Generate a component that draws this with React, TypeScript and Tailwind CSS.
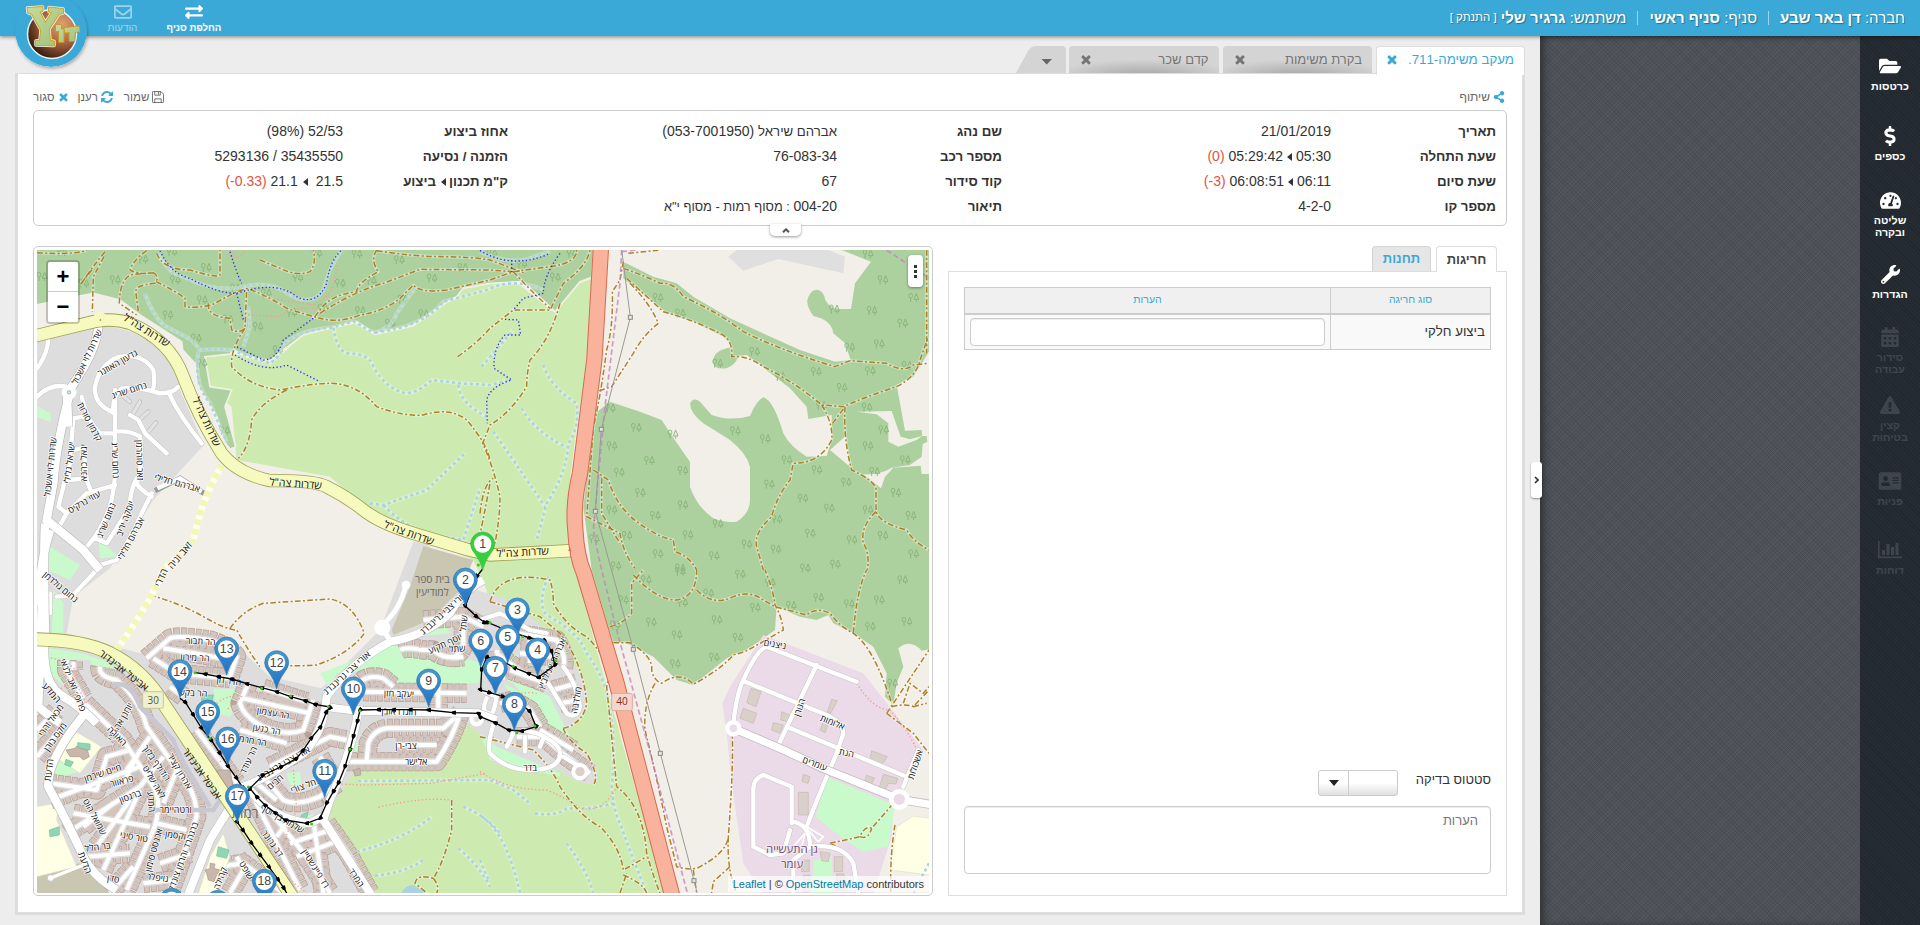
import React from 'react';
import {
  FaFolderOpen,
  FaDollarSign,
  FaTachometerAlt,
  FaWrench,
  FaCalendarAlt,
  FaExclamationTriangle,
  FaAddressCard,
  FaRegEnvelope,
  FaExchangeAlt,
  FaShareAlt,
} from 'react-icons/fa';

type IconProps = { className?: string };

const XIcon = ({ className }: IconProps) => (
  <svg viewBox="250 330 1290 1290" className={className} fill="currentColor">
    <path d="M1490 1322q0 40-28 68l-136 136q-28 28-68 28t-68-28l-294-294-294 294q-28 28-68 28t-68-28l-136-136q-28-28-28-68t28-68l294-294-294-294q-28-28-28-68t28-68l136-136q28-28 68-28t68 28l294 294 294-294q28-28 68-28t68 28l136 136q28 28 28 68t-28 68l-294 294 294 294q28 28 28 68z" />
  </svg>
);

const RefreshIcon = ({ className }: IconProps) => (
  <svg viewBox="128 128 1536 1536" className={className} fill="currentColor">
    <path d="M1639 1056q0 5-1 7-64 268-268 434.5t-478 166.5q-146 0-282.5-55t-243.5-157l-129 129q-19 19-45 19t-45-19-19-45v-448q0-26 19-45t45-19h448q26 0 45 19t19 45-19 45l-137 137q71 66 161 102t187 36q134 0 250-65t186-179q11-17 53-117 8-23 30-23h192q13 0 22.5 9.5t9.5 22.5zm25-800v448q0 26-19 45t-45 19h-448q-26 0-45-19t-19-45 19-45l138-138q-148-137-349-137-134 0-250 65t-186 179q-11 17-53 117-8 23-30 23h-199q-13 0-22.5-9.5t-9.5-22.5v-7q65-268 270-434.5t480-166.5q146 0 284 55.5t245 156.5l130-129q19-19 45-19t45 19 19 45z" />
  </svg>
);

const FloppyIcon = ({ className }: IconProps) => (
  <svg viewBox="0 0 13 13" className={className} fill="none" stroke="currentColor">
    <path d="M.5 1.2Q.5.5 1.2.5H9.6L12.5 3.4V11.8Q12.5 12.5 11.8 12.5H1.2Q.5 12.5.5 11.8Z" />
    <path d="M3 12.5V8.5H10V12.5M3 .5V4.5H9V.5M7 1V4" />
  </svg>
);

const ChartIcon = ({ className }: IconProps) => (
  <svg viewBox="0 0 24 18" className={className} fill="currentColor">
    <path d="M0 0h1.6v15.6H24V17.2H0zM4 9h3v5H4zM8.500 3h3v11h-3zM13 6h3v8h-3zM17.500 2h3v12h-3z" />
  </svg>
);

/* ---------------------------------- map ---------------------------------- */

const LEFT = '';
const EAST = 'translate(1350 0)';
const SOUTH = 'translate(0 990)';
const SE = 'translate(1350 990)';

type Line = { t: string; d: string };

const tracks: Line[] = [
  { t: LEFT, d: 'M21 38Q120 45 170 32M225 35Q180 90 155 130M222 50L190 110L187 215M185 90L150 135' },
  { t: LEFT, d: 'M350 32Q310 60 300 90Q330 105 370 98Q390 110 375 130Q310 135 318 160L325 215M370 98L310 103Q270 110 268 190L320 225' },
  { t: LEFT, d: 'M378 125Q440 155 465 175V200Q500 205 545 195L610 160L650 145Q720 170 770 205Q830 225 870 235Q930 250 990 225Q1060 215 1110 175L1150 135Q1170 160 1250 150L1380 120L1450 95L1560 80Q1640 70 1640 30' },
  { t: LEFT, d: 'M380 40Q400 90 480 90Q560 115 570 105V30M535 190Q530 230 600 235L605 270Q630 280 645 265L650 150' },
  { t: LEFT, d: 'M690 60L750 85Q800 110 840 95Q860 70 850 30M1040 30Q1020 60 1045 95Q980 130 980 155Q900 165 870 210L850 235' },
  { t: LEFT, d: 'M870 220Q980 150 1060 130L1170 88L1380 90L1450 95M1040 32Q1150 50 1240 50Q1320 50 1380 60L1480 98' },
  { t: LEFT, d: 'M645 265Q600 330 605 380Q660 440 750 450Q850 430 900 430Q980 430 1040 500Q1120 530 1180 525Q1260 500 1310 540Q1370 610 1380 660' },
  { t: LEFT, d: 'M770 450Q690 490 665 540Q660 620 625 655M1283 350Q1340 310 1380 265L1450 210L1560 210L1600 130Q1670 80 1680 30' },
  { t: EAST, d: 'M100 95Q150 150 210 205M240 190Q210 300 150 360Q140 400 140 440Q90 520 30 555L8 610Q40 680 60 770Q60 830 45 910M0 820Q10 730 40 715' },
  { t: EAST, d: 'M445 40L540 30M430 85Q500 110 540 130Q580 125 610 170Q720 220 790 275Q900 330 1065 380L1110 362L1220 370Q1270 400 1300 375L1347 370' },
  { t: EAST, d: 'M430 65L420 120L397 155Q400 260 380 330Q360 480 340 560Q330 700 320 830L420 880Q430 940 465 985' },
  { t: EAST, d: 'M440 115L550 215Q640 240 720 280Q760 300 755 350Q800 345 850 380Q950 430 1025 495L1090 500Q1170 465 1250 440Q1310 410 1320 360L1345 290' },
  { t: EAST, d: 'M450 130Q510 190 535 250Q490 285 460 340L395 440L350 455M1025 495Q1060 550 1055 600Q1020 670 940 670L930 720Q890 770 875 830Q820 880 830 920L850 990' },
  { t: EAST, d: 'M1095 500Q1090 600 1115 690Q1180 720 1188 745V815Q1200 850 1280 870Q1300 905 1347 930M1188 815Q1140 860 1150 910Q1170 940 1162 990M1058 550L1095 500M1340 30V340' },
  { t: EAST, d: 'M340 690L385 720Q410 800 470 845Q530 890 580 900L585 935Q630 950 650 990M365 715V820L420 910' },
  { t: SOUTH, d: 'M360 75Q450 100 520 140Q590 180 620 180Q660 250 690 290M600 175Q640 120 700 100L900 87Q970 100 1003 190Q960 250 860 285Q780 290 740 285' },
  { t: SOUTH, d: 'M1380 490L1395 510M1265 690V780Q1240 880 1210 925Q1160 910 1155 940Q1180 960 1190 969M1210 925Q1230 950 1220 969' },
  { t: SOUTH, d: 'M1340 -60Q1360 -150 1380 -260M1296 -78L1330 -80' },
  { t: SE, d: 'M30 95Q40 60 70 40Q120 10 210 30Q220 60 220 100Q260 170 320 200Q400 280 380 350Q390 450 410 650Q490 710 500 850Q520 920 540 969M30 95L180 140L240 190Q310 280 320 400Q310 460 250 475' },
  { t: SE, d: 'M0 500L80 520L160 540Q220 600 240 650Q300 740 360 770Q420 830 430 900L500 860M430 915Q490 940 500 969M420 969L440 910M250 475Q260 510 320 550Q360 620 340 645' },
  { t: SE, d: 'M400 218H450Q520 260 515 300Q520 330 545 340Q600 300 640 343Q720 300 760 255L795 245L840 220L910 180Q905 140 885 105Q880 60 855 0' },
  { t: SE, d: 'M390 170Q430 160 455 130V40Q480 10 490 0M460 15Q530 90 590 90Q650 80 650 0M650 60Q700 110 760 80Q810 60 850 90L885 110L980 135Q1010 110 1050 130Q1080 170 1120 190Q1180 230 1235 400M1120 190Q1130 60 1160 0' },
  { t: SE, d: 'M525 340Q490 400 495 480Q530 620 560 770Q580 850 590 890Q620 900 650 895Q740 850 745 800Q760 600 757 500M640 900L650 969M745 800Q740 900 770 969M750 890L700 935L695 969' },
  { t: SE, d: 'M1235 410Q1280 400 1300 410L1347 360M1220 430L1347 240M1270 400L1290 340L1330 370L1347 350M1220 430Q1260 460 1300 490L1347 550M1300 410L1340 400M1050 820L1140 800Q1155 765 1175 775L1240 700M1140 800Q1165 810 1175 775M1050 820Q1130 850 1135 969M1245 765Q1230 850 1232 969' },
];

const cycleways: Line[] = [
  { t: LEFT, d: 'M345 160Q365 220 400 255L485 300L510 330Q560 325 600 330L720 370Q760 340 755 320Q800 270 910 262Q960 245 975 245Q1010 270 1035 278Q1090 260 1100 220L1155 145M655 200L660 260L640 320M505 335Q490 430 540 490Q570 560 590 605' },
  { t: LEFT, d: 'M385 35Q410 100 460 110Q560 160 640 140Q720 120 780 165Q850 200 880 150L900 90Q920 50 935 30M1035 278Q1180 260 1240 185L1370 150Q1450 110 1540 150M1350 35Q1450 80 1510 50L1560 35' },
  { t: LEFT, d: 'M910 262Q920 330 950 340Q1020 340 1030 380Q1070 450 1130 460Q1170 455 1205 420L1290 430L1380 435L1440 420M1285 435Q1290 490 1370 530M1355 380L1450 270M1020 790L1060 795L1190 750L1305 640M1060 795Q1130 870 1230 890L1300 900L1350 745' },
  { t: EAST, d: 'M190 375Q210 440 290 490Q300 560 265 610Q260 700 200 790L170 900M125 505Q160 570 255 620M40 575Q100 660 195 800' },
  { t: SE, d: 'M205 20Q170 100 200 135Q300 190 320 250Q380 330 385 400Q410 500 395 650Q400 720 420 760Q460 870 500 969M165 730Q230 740 260 715Q330 720 400 700M5 740Q80 790 120 969M260 820Q320 900 340 969M0 870L25 930M1347 880L1300 969' },
  { t: SOUTH, d: 'M985 633L1380 630L1450 660L1500 700M980 845Q1120 810 1205 740M1035 917Q1120 910 1180 870M1300 710Q1370 740 1410 790M1285 835Q1350 890 1380 950' },
];

const blueDots: Line[] = [
  { t: LEFT, d: 'M390 32Q420 100 480 115Q560 160 620 160Q740 120 800 170Q860 200 890 130Q900 60 935 30M600 35Q620 100 635 130M620 160L640 240M850 235L760 300Q740 360 700 360L615 318M615 345Q700 400 770 375L870 425M1350 32Q1450 90 1560 40' },
  { t: EAST, d: 'M240 40Q190 110 190 160L130 175L100 210M75 238L115 240L122 285H75Q40 320 42 385L95 420Q30 440 20 480L22 550M95 60V95' },
];

const pinkDots: Line[] = [
  { t: LEFT, d: 'M600 30Q620 70 645 35M720 175L850 195Q910 170 915 110L925 75M655 225L750 230Q780 200 860 205' },
  { t: SOUTH, d: 'M38 230V260L100 270Q150 300 140 330L85 360M100 270L170 400M790 600L800 720L760 820M880 640L1000 645L1200 640L1370 610M1045 712Q1180 680 1260 690M540 590L600 560M690 860L830 969M1240 160L1170 200V240M560 400Q600 370 635 380L590 420' },
  { t: SE, d: 'M0 605Q80 660 200 660Q270 690 300 715Q370 730 410 650M40 400Q120 360 170 370M1130 340Q1180 420 1230 420Q1290 490 1310 540' },
];

const localRoads: Line[] = [
  { t: LEFT, d: 'M245 515Q190 490 195 440Q210 370 270 350Q340 340 370 390Q375 420 370 445M250 520Q245 470 275 445Q330 440 390 460Q430 460 445 440M417 460Q450 530 515 610M255 450V650Q260 720 240 800Q210 880 170 920M255 575Q300 570 330 590Q340 680 320 730Q330 750 365 770M345 580L410 640M345 580L325 540L300 525M155 470Q170 540 210 580H255M160 530L130 535L115 720L170 715M130 630L155 625M160 620L170 720L185 760M105 720L85 800L110 820L170 760L255 735M320 715Q300 750 300 800Q270 850 230 910L195 895M365 760L330 830Q300 900 260 960L210 975M110 820L90 855M55 290Q55 340 21 385M21 470Q60 430 110 440' },
  { t: SOUTH, d: 'M200 0L130 75L80 80M60 70V130' },
  { t: SE, d: 'M0 360L50 380Q40 440 30 430Q0 430 20 385M45 450Q20 520 30 550Q80 600 150 600Q240 600 240 550Q240 520 170 490L130 480M250 560L300 590M80 530L100 490M135 545V500M180 530L190 505M205 340L260 430Q290 450 300 410Q290 340 250 290M0 150L60 130L150 180L200 190' },
  { t: SE, d: 'M760 460Q770 370 790 330Q830 240 860 230L1130 335M1010 285L895 525M795 335L1040 435Q1090 460 1090 490L1070 550Q1010 690 980 770M920 470L1280 620M1315 540L1270 650M935 755Q990 760 990 830Q1090 820 1120 880L1135 969M935 760V650L850 615Q820 625 820 660V830L870 855L910 850L930 780M990 830L940 870V969' },
];

const greyLanes: Line[] = [
  { t: LEFT, d: 'M270 460L300 485M310 520L330 485M333 535L355 515M355 575L378 548' },
];

const housedStreets: Line[] = [
  { t: SOUTH, d: 'M350 265L420 205Q440 195 540 210Q600 230 620 260L600 320M400 235Q500 250 600 270M370 265L440 310L600 325' },
  { t: SOUTH, d: 'M655 340L630 400Q640 440 700 470Q770 500 820 480L850 390M640 385L840 430M700 355L830 395M630 480L770 520' },
  { t: SOUTH, d: 'M985 350Q1000 310 1060 325L1090 350M1000 365L1310 370M1225 340V420M1010 570L1015 520Q1030 480 1070 475H1240L1290 430M1290 430Q1270 500 1220 575H950M1100 525H1220' },
  { t: SOUTH, d: 'M700 620L760 690Q800 710 870 680L920 640M680 640L740 690M720 590L900 500L950 510M870 560L900 610M770 760L740 800M660 660L750 840L810 960M850 750L880 969M780 820L900 780M800 860L930 810M890 760Q920 800 960 860L1020 969' },
  { t: SOUTH, d: 'M110 270V300L160 385M130 275V300M210 290Q205 320 260 330Q330 390 350 470L470 640Q500 680 500 740L420 969M165 400L280 510L370 650Q400 700 370 780L290 960M60 640L200 660L230 560L300 540M60 690L330 590M110 790L330 650M130 730L360 770M160 770L250 700M330 540L280 640M200 830L300 690M220 900L330 660M170 860L300 850M240 969L310 890M360 500L290 600M400 560L330 650M440 600L400 700M380 760L470 780M390 880L480 850M340 940L430 930M21 560L100 470M21 480L80 420' },
  { t: SOUTH, d: 'M570 890L640 880L760 969M620 860L650 910M600 969L640 900M700 700L830 860L900 969M500 480L560 560L620 640M460 380L420 350' },
  { t: SOUTH, d: 'M1110 240Q1130 230 1180 240L1210 240Q1240 270 1300 260M1180 150L1300 140L1360 170M1300 140V230Q1280 270 1250 260M1400 240L1420 330' },
  { t: SE, d: 'M55 255L130 310L185 330M110 190L230 210Q260 260 250 290M120 250L220 260M150 190V280M90 300L200 340M220 360L290 340M240 400L300 390M60 400L100 390L150 420L180 470M110 500L190 500L260 560L330 610M180 480L280 540' },
];

const trees: number[][] = [
  [95, 35], [35, 110], [255, 120], [160, 130], [338, 58], [425, 35], [528, 83], [435, 120], [516, 180], [413, 225], [498, 295], [593, 238],
  [615, 145], [708, 160], [683, 260], [743, 330], [803, 113], [860, 40], [930, 130], [980, 42], [1023, 122], [1107, 60], [1205, 115],
  [1297, 83], [1117, 178], [990, 213], [1080, 250], [1180, 222], [785, 218], [878, 205], [515, 370], [583, 572], [1385, 40], [1475, 72],
  [1575, 112], [1625, 40], [2513, 42], [2558, 120], [2650, 173], [2525, 212], [2617, 250], [2412, 208], [2458, 322], [2547, 312],
  [2630, 377], [2520, 393], [2435, 443], [2358, 395], [2373, 497], [2510, 502], [2560, 570], [2513, 618], [2625, 660], [2533, 695],
  [1883, 173], [1950, 220], [2173, 335], [2062, 370], [2250, 410], [1740, 505], [1818, 563], [1745, 618], [1857, 662], [1767, 697],
  [1928, 583], [1958, 692], [2115, 573], [2205, 597], [2270, 660], [2360, 690], [2448, 727], [2597, 758], [1830, 758], [1958, 795],
  [2217, 733], [2318, 775], [2397, 805], [2513, 810], [2642, 827], [1745, 810], [1875, 827], [2063, 852], [1692, 897], [1790, 887],
  [1973, 885], [2150, 913], [2240, 838], [2340, 880], [2465, 900], [2558, 887], [1883, 942], [2052, 948], [2237, 928], [2650, 942],
  [1757, 978], [1950, 985], [2325, 985], [2415, 973], [1848, 1020], [1950, 995], [2130, 1003], [2220, 1028], [2617, 1020],
  [1780, 1080], [1957, 1088], [2035, 1060], [2175, 1103], [2283, 1097], [2365, 1073], [2457, 1092], [2547, 1080], [1863, 1147],
  [2060, 1140], [1940, 1185], [2123, 1193], [2520, 1160], [2630, 1145], [2052, 1252], [1935, 1272], [2587, 1330], [1755, 1155],
];

type LabelDef = [string, number, number, number, number?];

const labels: LabelDef[] = [
  ['שדרות צה"ל', 350, 270, 32, 32],
  ['שדרות צה"ל', 530, 545, 65, 32],
  ['שדרות צה"ל', 797, 730, 4, 32],
  ['שדרות צה"ל', 1137, 878, 20, 32],
  ['שדרות צה"ל', 1478, 936, -3, 32],
  ['שדרות לוי אשכול', 170, 350, -65],
  ['שדרות לוי אשכול', 60, 680, -84],
  ['גדעון האוזנר', 262, 368, -30],
  ['נחום שריג', 297, 450, -18],
  ['קדמון סורות', 180, 545, 62],
  ['ישראל גלילי', 117, 668, -83],
  ['נחום שריג', 257, 660, 88],
  ['זאב סוהרמן', 330, 660, 88],
  ['יגאל כהנא', 160, 668, -90],
  ['אברהם חלילי', 442, 728, 15],
  ['אברהם חלילי', 302, 895, -62],
  ['עוזי נרקיס', 162, 785, -30],
  ['נחום שריג', 228, 840, -68],
  ['יוסקה יריב', 285, 835, -70],
  ['זאב וניה', 448, 945, -50, 30],
  ['הדרי', 392, 1012, -65, 30],
  ['נחום גולדמן', 92, 1040, 40],
  ['אביטל אבינדור', 282, 1290, 38, 31],
  ['אביטל אבינדור', 517, 1600, 55, 31],
  ['המדע', 65, 1358, 48, 29],
  ['פרופ׳ זאב ילנאי', 130, 1335, 68],
  ['הר תבור', 512, 1203, 3],
  ['הר מירון', 495, 1252, 3],
  ['הר בקע', 490, 1358, 3],
  ['הדר חן', 597, 1322, 8],
  ['הר עצמון', 730, 1418, 10],
  ['הר כנען', 710, 1467, 10],
  ['הר חרמון', 662, 1500, 10],
  ['הר עודד', 655, 1560, -65],
  ['אורי צבי גרינברג', 950, 1298, -42, 28],
  ['אורי צבי גרינברג', 1240, 1118, -42, 28],
  ['אורי צבי גרינברג', 760, 1570, -30, 28],
  ['שלמה בן יוסף', 757, 1735, 30],
  ['נחל צורי', 825, 1635, -20],
  ['חבים', 735, 1625, -40],
  ['יעקב חזן', 1107, 1360, 2],
  ['הוגו ראובן', 1107, 1414, 2],
  ['צבי-רן', 1128, 1515, 0],
  ['אלישר', 1158, 1565, 0],
  ['שתל', 1300, 1150, -85],
  ['יוסף תקוע', 1245, 1210, -25],
  ['שתל', 1282, 1225, -5],
  ['חיים שירמן', 218, 1598, -18],
  ['פראוור', 275, 1622, -15],
  ['ברגסון', 300, 1668, -20],
  ['המדע', 365, 1685, 85],
  ['הדעת', 56, 1590, -82, 29],
  ['הדעת', 165, 1868, 70, 29],
  ['שמואל הוט', 195, 1730, 62],
  ['טור סיני', 312, 1790, 10],
  ['בר הלל', 203, 1820, -8],
  ['ורטהיימר', 437, 1707, 0],
  ['וקסמן', 437, 1785, 8],
  ['ארנסט סימון', 370, 1830, -75],
  ['ברגהרד והרמן צונדק', 458, 1850, -70],
  ['גויפלר', 383, 1912, 8],
  ['סדן', 250, 1915, 10],
  ['מקס בורן', 75, 1490, -55],
  ['מכאל זהרי', 62, 1440, -55],
  ['יוחנן אהרוני', 270, 1445, -60],
  ['האורה', 262, 1487, 45],
  ['רודולף בלוך', 380, 1568, 55],
  ['אהרון קציר', 450, 1593, 60],
  ['לאה שליט', 373, 1625, 60],
  ['דב גרונר', 728, 1810, 55],
  ['שופט', 650, 1890, 60],
  ['רד פיינשטיין', 858, 1885, 58],
  ['המרד', 980, 1913, 55],
  ['קהילה', 570, 1915, -70],
  ['מולדבה', 1638, 1380, -80],
  ['בדר', 1500, 1583, 0],
  ['אברהם אנילביץ', 1565, 1270, -65],
  ['ניצנים', 2235, 1212, 10],
  ['הגורן', 2308, 1402, -70],
  ['אלומות', 2408, 1446, 22],
  ['הגת', 2450, 1538, 12],
  ['עומרים', 2355, 1570, 20],
  ['אשכולות', 2655, 1573, -72],
];

const route =
  'M1358 987L1340 1010L1306 1098L1340 1130L1365 1148L1375 1148L1440 1175L1500 1194L1545 1202L1565 1235L1575 1275L1525 1312L1495 1300L1453 1283L1410 1260L1370 1252L1355 1290L1352 1350L1380 1358L1420 1370L1460 1380L1500 1415L1518 1460L1475 1473L1435 1470L1395 1448L1350 1430L1345 1420L1270 1418L1195 1410L1140 1409L1090 1409L1045 1409L990 1410L982 1445L970 1490L960 1530L945 1580L925 1630L910 1655L890 1690L870 1735L830 1750L765 1740L735 1718L705 1695L680 1670L660 1645L700 1605L755 1580L800 1555L820 1530L845 1493L872 1460L890 1415L900 1401L855 1393L825 1382L782 1370L740 1355L695 1343L650 1331L605 1317L565 1310L525 1302L495 1298';
const route2 = 'M450 1375L467 1388L490 1425L515 1465L545 1502L570 1540L595 1580L620 1615L640 1645M622 1747L640 1772L665 1810L692 1847L718 1882L745 1920L762 1945L770 1959';

const pins: [string, number, number][] = [
  ['1', 1358, 912],
  ['2', 1306, 1020],
  ['3', 1462, 1110],
  ['5', 1433, 1191],
  ['6', 1352, 1203],
  ['13', 590, 1227],
  ['4', 1523, 1230],
  ['12', 740, 1268],
  ['7', 1396, 1285],
  ['14', 450, 1295],
  ['9', 1196, 1323],
  ['10', 970, 1347],
  ['8', 1453, 1393],
  ['15', 533, 1416],
  ['16', 593, 1497],
  ['11', 884, 1594],
  ['17', 622, 1669],
  ['18', 703, 1924],
  ['', 425, 1981],
  ['', 563, 1987],
];

const Lines = ({ items, ...rest }: { items: Line[] } & React.SVGProps<SVGPathElement>) => (
  <>
    {items.map((l, i) => (
      <path key={i} d={l.d} transform={l.t || undefined} fill="none" strokeLinejoin="round" {...rest} />
    ))}
  </>
);

const hwy40 = 'M1713 20L1693 360L1650 700Q1628 790 1636 870Q1640 950 1662 1000L1760 1330L1930 1980';
const roadTzahal =
  'M15 288L170 250Q240 230 300 250Q420 300 460 410Q500 520 575 640Q620 700 720 722Q850 720 890 740Q950 770 1000 810Q1050 850 1150 880L1310 928L1380 945L1625 932';
const roadAvigdor = 'M15 1198Q160 1200 240 1240Q340 1290 400 1390L600 1690L790 1975';
const artery = 'M205 260Q200 330 125 440Q80 600 70 730L50 840L160 930L210 990M110 450L115 560M45 850Q40 960 45 1180Q30 1330 100 1370Q150 1400 200 1450M60 870Q20 1000 35 1100L25 1400Q60 1430 90 1450M165 1420Q50 1560 55 1640Q120 1760 160 1850Q190 1910 260 1950';
const artery2 = 'M1360 1020Q1290 1060 1260 1120Q1180 1190 1080 1205Q960 1270 890 1370Q880 1480 820 1540Q700 1620 640 1640Q600 1700 540 1800L470 1975M900 1402Q960 1412 985 1410Q970 1520 900 1680L880 1740L1030 1975M985 1412L1345 1420L1400 1440M660 1650Q730 1740 840 1750L875 1730';

function TownMap() {
  return (
    <svg viewBox="21 30 2676 1929" className="block h-[643px] w-[892px]" style={{ fontFamily: "'Open Sans', 'Noto Sans', 'DejaVu Sans', sans-serif" }}>
      <defs>
        <linearGradient id="pin" x1="0" y1="0" x2="0" y2="1">
          <stop offset="0" stopColor="#4a97cb" />
          <stop offset="1" stopColor="#1f72c4" />
        </linearGradient>
        <g id="tree" fill="none" stroke="#86b577" strokeWidth="2.8">
          <ellipse cx="-8" cy="-6" rx="5.500" ry="7" />
          <path d="M-8 1V13M9 -13L2 5H16ZM9 5V13" />
        </g>
        <marker id="dot" viewBox="-8 -8 16 16" markerWidth="16" markerHeight="16" markerUnits="userSpaceOnUse" orient="auto">
          <path d="M-8 -6Q3 -7 7 0Q3 7 -8 6Z" fill="#000" />
        </marker>
      </defs>
      <rect x="0" y="0" width="2760" height="2000" fill="#f2efe9" />

      {/* land cover */}
      <path
        fill="#cdebb0"
        d="M525 350L605 345L760 340L820 280L910 262L980 250L1035 285L1150 260L1245 190L1300 145L1450 120L1570 215L1650 130L1690 115L1665 400L1640 560L1612 780L1620 920L1700 1230L1780 1520L1910 1970H1030L880 1750L960 1590L1290 1450L1380 1300L1370 1050L1330 960L1060 850L900 710L620 660L605 500L535 440Z"
      />
      <path
        fill="#add19e"
        stroke="#f2efe9"
        strokeWidth="5"
        d="M10 20H1692L1685 112L1650 125L1575 215L1480 125L1380 130L1300 145L1280 170L1245 190L1150 255L1035 282L980 245L910 262L820 285L760 330L720 362L650 350L610 330L600 342L525 350L540 440L605 450L585 500L617 620L600 628L580 600L560 530L500 430L495 370L458 330L455 305L330 225L270 180L190 160L140 170L10 197Z"
      />
      <path
        fill="#add19e"
        transform={EAST}
        d="M430 65L520 110L590 130L640 170L750 235L860 285L960 330L1065 365L1112 360L1095 310L1060 280Q1055 240 1000 228Q980 200 982 180Q990 150 1010 149Q1030 150 1036 180Q1050 205 1075 207L1113 207L1125 130L1173 65L1085 30H1360V1225L1325 1232Q1290 1195 1255 1225L1270 1280L1250 1330L1240 1395L1215 1370L1220 1300L1180 1220L1120 1180L1060 1150L1045 1125L1010 1140L960 1130L890 1100L885 1170L800 1230L740 1255L640 1335L590 1320L520 1250L440 1210L400 1205L385 1160L335 990L310 800L330 640L345 520L390 485L480 515L545 540Q590 610 630 665V740Q650 800 700 835Q740 850 770 845Q810 820 810 780V680Q800 640 750 600L670 550Q630 520 630 490Q640 470 660 485L695 525Q750 545 810 528Q830 480 850 472Q880 480 910 580Q930 620 980 650L1040 648L1055 600V525L985 537L980 500L930 445L800 345L755 350V315L730 290L640 245L560 220L430 115Z"
      />
      <path transform={EAST} fill="#add19e" d="M755 322Q700 330 699 365Q700 390 740 385Q765 375 775 350Z" />
      <path
        transform={EAST}
        fill="#f2efe9"
        d="M1250 435L1300 410L1350 330V702H1325L1322 677L1240 683L1215 710L1203 745L1150 703Q1200 705 1235 683L1290 675L1325 650L1328 612L1342 605L1340 588H1326L1325 570L1275 572L1262 500ZM1130 515L1235 513L1262 590L1290 598L1326 588L1310 600L1255 620L1225 605V550L1190 523ZM1050 630L1097 588L1110 680Z"
      />
      <path transform={EAST} fill="#e0dfdf" d="M745 50L770 30H1045L1095 50L1090 100L895 57L790 92Z" />
      <path fill="#dedddd" d="M15 305L200 260Q300 255 400 330L445 400L450 450L522 615L370 780L240 985L130 1070L110 1180L330 1240L420 1178L560 1180L620 1220L720 1310L875 1345L1050 1170L1150 905L1190 912L1340 1050L1440 1080L1550 1170L1600 1230Q1680 1330 1675 1380Q1650 1450 1600 1480L1680 1550Q1720 1610 1690 1630Q1650 1640 1590 1590Q1500 1610 1390 1570L1350 1480L1290 1440L1220 1588L980 1580L880 1740L1010 1970H10Z" />
      <path fill="#c9c6b2" d="M1180 918L1330 960L1290 1050L1200 1140L1090 1185L1085 1170L1140 1040ZM21 1890L150 1870L250 1965H15Z" />
      <path fill="#c8facc" d="M60 920L150 975L120 1020L40 985ZM205 895L265 950L210 955ZM15 495L62 520V545L15 530ZM70 1050L100 1090V1190L65 1180ZM35 1225Q150 1230 240 1270L290 1330L260 1305H200L180 1260L100 1260L150 1370L160 1390L60 1300ZM550 1345L650 1350L600 1430L560 1420ZM870 1300L1090 1215L1370 1270L1345 1330L1090 1330L1060 1290L920 1300L900 1350ZM1230 1130L1260 1180L1160 1190ZM1400 1305L1440 1310L1520 1350L1560 1370L1620 1490L1590 1500L1540 1440L1450 1330ZM1350 1480L1400 1520L1590 1600V1610L1380 1560Z" />
      <path fill="#c8facc" d="M1420 1330L1500 1370L1560 1390L1590 1450L1540 1480L1470 1400ZM1445 1240L1465 1245L1455 1290L1435 1280ZM770 1600L810 1595L815 1640L780 1635ZM950 1480L985 1500V1580H955ZM780 1760L850 1720L840 1760L760 1810ZM40 1590L100 1530L160 1590L70 1620Z" />
      <path fill="#ffffe5" stroke="#e8e2c8" strokeWidth="2" d="M15 1700L85 1690L80 1740L140 1880L20 1910ZM270 1730L310 1720L320 1760L280 1765Z" />
      <path transform={SE} fill="#ebdbe8" d="M850 195L1150 310L1330 540L1240 710L1235 800L1190 940L1180 975H850L790 880L755 640L740 490L727 400L750 350Z" />
      <path transform={SE} fill="#c8facc" d="M1040 620L1245 705L1225 830L1150 845L1080 800L1008 740ZM1000 870L1055 860L1060 970H995Z" />
      <path transform={SE} fill="#ffffe5" stroke="#e5dfc6" strokeWidth="2" d="M1250 770L1300 738L1350 745V915L1230 900Z" />
      <path fill="#aad3df" d="M1110 1970Q1120 1935 1150 1935Q1180 1950 1190 1970Z" />
      <path transform={SE} fill="#d9d0c9" stroke="#c5b8ae" strokeWidth="2" d="M813 355L843 365L828 410L800 398ZM790 415L830 430L820 460L780 445ZM905 425L930 435L922 455L902 450ZM880 458L910 465L900 490L875 480ZM1055 388L1072 392L1052 430L1042 425ZM1030 455L1045 460L1035 488L1020 480ZM955 667H985V735H955ZM970 613L990 620L984 640L966 634ZM1175 542L1222 560L1205 585L1170 570ZM1160 616L1183 624L1172 648L1152 640ZM1210 613L1253 625L1248 642L1225 640L1215 662L1197 655ZM1020 845L1050 850L1045 875L1025 872ZM1063 860H1088V905H1063ZM965 870H988V905H965ZM970 915H990V965H970ZM1070 912H1092V960H1070Z" />

      {trees.map(([x, y], i) => (
        <use key={i} href="#tree" x={x} y={y} />
      ))}

      {/* houses along residential streets */}
      <Lines items={housedStreets} stroke="#b8a399" strokeWidth="58" strokeDasharray="18 3" />
      <Lines items={housedStreets} stroke="#d3c5bd" strokeWidth="53" strokeDasharray="14 7" strokeDashoffset="-2" />
      <Lines items={housedStreets} stroke="#dedddd" strokeWidth="20" />
      <Lines items={housedStreets} stroke="#fff" strokeWidth="12" />

      {/* school grounds and sport pitches */}
      <path fill="#ffffe5" stroke="#e0dbc0" strokeWidth="2" d="M130 1470L215 1520L150 1600L88 1560ZM580 1780L600 1850L560 1960H505L540 1850Z" />
      <path fill="#8fd6b4" stroke="#6cbf9c" strokeWidth="2" d="M143 1508L180 1512V1530H143ZM108 1558L130 1566L122 1580L104 1574ZM515 1365H550L545 1390H515ZM565 1820L597 1830L590 1855L560 1848ZM58 1770L88 1760V1785L60 1790ZM815 1725L835 1715L828 1740L808 1738Z" />
      <path fill="#c9b6ad" stroke="#a8958c" strokeWidth="2" d="M108 1530L135 1525L140 1518L150 1525L172 1530L178 1550L160 1560L150 1550L120 1550ZM540 1870L555 1872L552 1885L570 1890L560 1905L552 1925L535 1920L530 1900L525 1890L540 1886ZM560 1590L600 1590L610 1640L580 1650ZM970 1590L990 1585L992 1605L975 1608Z" />

      {/* trails */}
      <Lines items={cycleways} stroke="#ffffff" strokeOpacity=".3" strokeWidth="12" />
      <Lines items={cycleways} stroke="#abd3e0" strokeWidth="8" strokeDasharray="9 9" />
      <Lines items={tracks} stroke="#fff" strokeOpacity=".4" strokeWidth="9" />
      <Lines items={tracks} stroke="#ad8128" strokeWidth="4.500" strokeDasharray="17 7 6 7" />
      <Lines items={blueDots} stroke="#2b2bf0" strokeWidth="4" strokeDasharray="4 7" />
      <Lines items={pinkDots} stroke="#f99a90" strokeWidth="4" strokeDasharray="4 7" />
      <path d="M1775 30L1770 130L1725 500L1690 870L1710 970L1760 1170L1850 1500L1975 1970M1775 35L1820 30M2570 30L2697 115" fill="none" stroke="#c583c0" strokeOpacity=".8" strokeWidth="5" strokeDasharray="16 9" />
      <path d="M1775 30L1801 232L1714 568L1696 814L1810 1228L1891 1540L1992 1922L2003 1965" fill="none" stroke="#999" strokeWidth="3" />
      {[[1801, 232], [1714, 568], [1696, 814], [1810, 1228], [1891, 1540], [1992, 1922]].map(([x, y]) => (
        <rect key={y} x={x - 6} y={y - 6} width="12" height="12" fill="#e6e2dc" stroke="#8a8a8a" strokeWidth="3" />
      ))}

      {/* roads */}
      <Lines items={greyLanes} stroke="#b5b5b5" strokeWidth="13" strokeLinecap="round" />
      <Lines items={greyLanes} stroke="#e4e3e3" strokeWidth="10" strokeLinecap="round" />
      <Lines items={localRoads} stroke="#c9c5c5" strokeWidth="16" strokeLinecap="round" />
      <Lines items={localRoads} stroke="#fff" strokeWidth="13" strokeLinecap="round" />
      <path d="M375 752L450 715L530 765" fill="none" stroke="#999" strokeWidth="16" />
      <path d="M382 745L450 715L515 755" fill="none" stroke="#fff" strokeWidth="13" />
      <path d={artery} fill="none" stroke="#bbb" strokeWidth="29" />
      <path d={artery2} fill="none" stroke="#bbb" strokeWidth="27" />
      <path d={artery} fill="none" stroke="#fff" strokeWidth="25" />
      <path d={artery2} fill="none" stroke="#fff" strokeWidth="24" />
      <path d="M250 1335Q300 1320 330 1400L430 1500Q440 1540 540 1700M375 1710H550L570 1680" fill="none" stroke="#c8c7d2" strokeWidth="14" />
      <circle cx="117" cy="457" r="22" fill="#fff" />
      <circle cx="117" cy="457" r="5" fill="#c8facc" stroke="#888" strokeWidth="2" />
      <circle cx="1057" cy="1163" r="24" fill="#fff" />
      <path d="M1060 1170L1080 1200M1057 1155Q1110 1110 1128 1035" fill="none" stroke="#fff" strokeWidth="15" />
      <circle cx="1128" cy="1035" r="13" fill="#fff" />
      <circle cx="62" cy="1914" r="10" fill="#fff" stroke="#ccc" strokeWidth="3" />
      <path d="M62 1914L160 1875" stroke="#fff" strokeWidth="9" />
      <circle cx="1340" cy="1438" r="15" fill="#e0dfdf" stroke="#fff" strokeWidth="13" />
      <circle cx="1650" cy="1595" r="20" fill="#d9d0c9" stroke="#fff" strokeWidth="12" />
      <g transform={SE} fill="none">
        <path d="M760 475L900 535L1040 600L1260 688L1350 703" stroke="#c5bcc3" strokeWidth="27" />
        <path d="M760 475L900 535L1040 600L1260 688L1350 703" stroke="#fff" strokeWidth="22" />
        <circle cx="760" cy="475" r="18" fill="#ebdbe8" stroke="#fff" strokeWidth="13" />
        <circle cx="1258" cy="688" r="24" fill="#ebdbe8" stroke="#fff" strokeWidth="14" />
        <path d="M980 770L1030 800L1015 815L980 775M940 830L975 790M965 830L975 790" stroke="#fff" strokeWidth="5" />
      </g>
      <path d="M578 675Q520 760 490 900L400 990Q350 1110 255 1235" fill="none" stroke="#fdfdf2" strokeWidth="20" />
      <path d="M578 675Q520 760 490 900L400 990Q350 1110 255 1235" fill="none" stroke="#f4f6b4" strokeWidth="20" strokeDasharray="17 13" />
      <path d={roadTzahal} fill="none" stroke="#9ea154" strokeWidth="40" />
      <path d={roadAvigdor} fill="none" stroke="#9ea154" strokeWidth="42" />
      <path d={roadTzahal} fill="none" stroke="#f7fabf" strokeWidth="35" />
      <path d={roadAvigdor} fill="none" stroke="#f7fabf" strokeWidth="37" />
      <circle cx="210" cy="238" r="22" fill="#f7fabf" />
      <circle cx="211" cy="240" r="2.500" fill="#707d05" />
      <path d={hwy40} fill="none" stroke="#d5694f" strokeWidth="49" />
      <path d={hwy40} fill="none" stroke="#f9b29c" strokeWidth="43" />
      <text x="1624" y="936" fontSize="18" fill="#d5694f">4</text>

      {/* street names */}
      <g fill="#111" stroke="#fff" strokeWidth="5" strokeLinejoin="round" paintOrder="stroke" textAnchor="middle" dominantBaseline="central">
        {labels.map(([s, x, y, a, size], i) => (
          <text key={i} transform={`translate(${x} ${y}) rotate(${a})`} fontSize={size ?? 27} strokeOpacity={size === 32 || size === 31 ? 0 : 0.85}>
            {s}
          </text>
        ))}
      </g>
      <g textAnchor="middle" dominantBaseline="central">
        <g fill="#666">
          <text x="1207" y="1018" fontSize="31">בית ספר</text>
          <text x="1207" y="1055" fontSize="31">למודיעין</text>
          <text x="645" y="1718" fontSize="40">רמות</text>
        </g>
        <g fill="#6e4a6b" stroke="#f6eef4" strokeWidth="5" paintOrder="stroke" fontSize="34">
          <text x="2286" y="1825">גן התעשייה</text>
          <text x="2286" y="1870">עומר</text>
        </g>
        <rect x="338" y="1355" width="62" height="50" rx="6" fill="#eef0d0" stroke="#c6c69a" strokeWidth="3" />
        <text x="370" y="1379" fontSize="30" fill="#565a20">30</text>
        <rect x="1745" y="1360" width="62" height="52" rx="6" fill="#f5d6cc" stroke="#dda999" strokeWidth="3" />
        <text x="1776" y="1384" fontSize="30" fill="#7a2e1c">40</text>
      </g>

      {/* vehicle route and stops */}
      <path d={route} fill="none" stroke="#000" strokeWidth="4" markerMid="url(#dot)" />
      <path d={route2} fill="none" stroke="#000" strokeWidth="4" markerMid="url(#dot)" />
      {[[1345, 975], [1380, 1148], [1478, 1190], [1578, 1262], [1450, 1279], [1515, 1458], [1460, 1478], [990, 1412], [960, 1528], [845, 1752], [655, 1641], [895, 1400], [782, 1368], [695, 1344], [495, 1298], [540, 1495]].map(([x, y]) => (
        <circle key={`${x}-${y}`} cx={x} cy={y} r="4.500" fill="#3c1" />
      ))}
      {pins.map(([n, x, y]) => (
        <g key={`${x}`} transform={`translate(${x} ${y})`}>
          <path
            d="M0 78Q-6 52 -24 28Q-36 14 -36 0A36 36 0 0 1 36 0Q36 14 24 28Q6 52 0 78Z"
            fill={n === '1' ? '#36cf3f' : 'url(#pin)'}
            stroke={n === '1' ? '#35b93c' : '#2c77b4'}
            strokeWidth="2"
          />
          <circle r="26" fill="#fff" />
          <text textAnchor="middle" y="12" fontSize="37" fill="#444" style={{ fontFamily: "'Liberation Sans', sans-serif" }}>
            {n}
          </text>
        </g>
      ))}
    </svg>
  );
}

function MapPanel() {
  return (
    <div className="relative h-[650px] w-[900px] rounded-[5px] border border-[#ccc] p-[3px]">
      <TownMap />
      <div dir="ltr" className="absolute left-[12px] top-[13px] w-[34px] rounded border-2 border-black/20 bg-clip-padding text-black">
        <div className="flex h-[30px] items-center justify-center rounded-t-[2px] border-b border-[#ccc] bg-white text-[22px] font-bold leading-none">+</div>
        <div className="flex h-[30px] items-center justify-center rounded-b-[2px] bg-white text-[22px] font-bold leading-none">−</div>
      </div>
      <div className="absolute right-[9px] top-[8px] flex h-[32px] w-[15px] flex-col items-center justify-center gap-[2px] rounded bg-white shadow-[0_1px_3px_rgba(0,0,0,0.4)]">
        <i className="size-[3px] bg-[#333]" />
        <i className="size-[3px] bg-[#333]" />
        <i className="size-[3px] bg-[#333]" />
      </div>
      <div dir="ltr" className="absolute bottom-[3px] right-[3px] whitespace-nowrap bg-white/70 px-[5px] text-[11px] leading-[16px] text-[#333]">
        <span className="text-[#0078a8]">Leaflet</span> | © <span className="text-[#0078a8]">OpenStreetMap</span> contributors
      </div>
    </div>
  );
}

/* --------------------------------- chrome -------------------------------- */

function Logo() {
  const y = 'M12.500 13L27.500 12V16L24.500 17L30.500 28L37 17.500L34 16.500V12.500L48 14V18L44 19L34 34L35 45.500L39 46.500V50.500L21 50V46L25 45.500L26 35L17 19L13 17.500Z';
  const rest = 'M41 30L46 30V34L48.500 34.500V47H44V36H41ZM49.500 33L64 31.500L64.500 36.500L60 37L59.500 46H54.500V37L50 37.500Z';
  return (
    <svg viewBox="0 0 72 72" className="absolute left-[15px] top-[-5px] size-[72px] rounded-full shadow-[1px_2px_3px_rgba(0,0,0,0.25)]">
      <defs>
        <radialGradient id="ball" cx=".7" cy=".3" r=".8">
          <stop offset="0" stopColor="#e3a070" />
          <stop offset=".45" stopColor="#b06a42" />
          <stop offset="1" stopColor="#2a1408" />
        </radialGradient>
        <linearGradient id="leaf" x1="0" y1="0" x2="1" y2="1">
          <stop offset="0" stopColor="#c4dc9c" />
          <stop offset="1" stopColor="#9fc07c" />
        </linearGradient>
      </defs>
      <circle cx="36" cy="36" r="36" fill="#3aa9d8" />
      <circle cx="37" cy="39" r="24.500" fill="url(#ball)" stroke="#e6f3fa" strokeWidth="1.500" />
      <g strokeLinejoin="round">
        <path d={y} fill="#e9f4f8" stroke="#e9f4f8" strokeWidth="3.500" />
        <path d={y} fill="#d9a21c" stroke="#d9a21c" strokeWidth="2" />
        <path d={y} fill="url(#leaf)" />
        <path d={rest} fill="#cf9a1c" stroke="#cf9a1c" strokeWidth="1.600" />
        <path d={rest} fill="url(#leaf)" />
      </g>
    </svg>
  );
}

function Header() {
  return (
    <header className="relative z-20 flex h-9 items-center bg-[#3aa9d8] pr-[15px] text-[15px] text-white shadow-[0_1px_4px_rgba(0,0,0,0.45)]">
      <div className="flex items-center whitespace-nowrap [text-shadow:1px_1px_1px_rgba(0,0,0,0.35)]">
        <span>חברה: <b>דן באר שבע</b></span>
        <i className="mx-[11px] h-[14px] w-px bg-white/50" />
        <span>סניף: <b>סניף ראשי</b></span>
        <i className="mx-[11px] h-[14px] w-px bg-white/50" />
        <span>משתמש: <b>גרגיר שלי</b></span>
        <span className="mr-[4px] text-[11.5px]">[ התנתק ]</span>
      </div>
      <div className="mr-auto flex pl-[107px] text-[10px] leading-[11px]">
        <div className="ml-[29px] flex w-[54px] flex-col items-center whitespace-nowrap font-bold">
          <FaExchangeAlt className="h-[18px] w-[18px]" />
          <span className="mt-px text-[9.7px]">החלפת סניף</span>
        </div>
        <div className="flex w-[31px] flex-col items-center whitespace-nowrap opacity-50">
          <FaRegEnvelope className="size-[18px]" />
          <span className="mt-px">הודעות</span>
        </div>
      </div>
      <Logo />
    </header>
  );
}

type NavItem = { icon: React.ReactNode; label: string[]; off?: boolean; h: string };
const nav: NavItem[] = [
  { icon: <FaFolderOpen className="h-[20px] w-[22px]" />, label: ['כרטסות'], h: 'h-[70px]' },
  { icon: <FaDollarSign className="size-[20px]" />, label: ['כספים'], h: 'h-[64px]' },
  { icon: <FaTachometerAlt className="size-[21px]" />, label: ['שליטה', 'ובקרה'], h: 'h-[74px]' },
  { icon: <FaWrench className="size-[19px]" />, label: ['הגדרות'], h: 'h-[63px]' },
  { icon: <FaCalendarAlt className="size-[20px]" />, label: ['סידור', 'עבודה'], off: true, h: 'h-[68px]' },
  { icon: <FaExclamationTriangle className="size-[20px]" />, label: ['קצין', 'בטיחות'], off: true, h: 'h-[76px]' },
  { icon: <FaAddressCard className="h-[20px] w-[24px]" />, label: ['פניות'], off: true, h: 'h-[69px]' },
  { icon: <ChartIcon className="h-[18px] w-[24px]" />, label: ['דוחות'], off: true, h: 'h-[65px]' },
];

function Sidebar() {
  return (
    <nav className="w-[60px] shrink-0 bg-[#262c33] bg-[repeating-linear-gradient(45deg,rgba(0,0,0,0.12)_0_1px,transparent_1px_3px)] pt-[20px] text-center text-[10.7px] leading-[12px] text-white">
      {nav.map((n) => (
        <div key={n.label[0]} className={`${n.h} ${n.off ? 'opacity-12' : ''} flex flex-col items-center`}>
          <div className="mb-[4px] flex h-[20px] items-center">{n.icon}</div>
          {n.label.map((l) => (
            <div key={l} className="font-bold">{l}</div>
          ))}
        </div>
      ))}
    </nav>
  );
}

function Tabs() {
  return (
    <div className="flex h-[27px] pr-[15px] text-[13px]">
      <div className="relative z-10 flex h-[29px] w-[149px] items-center justify-between rounded-t border border-b-0 border-[#ddd] bg-white pb-[2px] pl-[10px] pr-[10px] text-[13.300px] text-[#3aa9d8]">
        <span>מעקב משימה-711.</span>
        <XIcon className="size-[10px]" />
      </div>
      {['בקרת משימות', 'קדם שכר'].map((t) => (
        <div
          key={t}
          className="mr-[4px] flex h-[27px] w-[149.5px] items-center justify-between rounded-t bg-[#d4d4d4] bg-[radial-gradient(ellipse_60%_60%_at_50%_110%,#a6a6a6,#d4d4d4)] pl-[12px] pr-[10px] text-[#757575]"
        >
          <span>{t}</span>
          <XIcon className="size-[10px]" />
        </div>
      ))}
      <svg viewBox="0 0 50 27" className="mr-[3px] h-[27px] w-[50px]">
        <path d="M0 27L12 5Q15 0 20 0H46Q50 0 50 4V27Z" fill="#d4d4d4" />
        <path d="M25.500 13H36L30.700 18.500Z" fill="#666" />
      </svg>
    </div>
  );
}

const Arrow = ({ className = 'mx-[4px]' }: IconProps) => (
  <svg viewBox="0 0 5 8" className={`${className} inline-block h-[8px] w-[5px] align-[0px]`} fill="currentColor">
    <path d="M5 0V8L0 4Z" />
  </svg>
);

function Red({ children }: { children: React.ReactNode }) {
  return <bdi dir="ltr" className="text-[#e8513c]">{children}</bdi>;
}

const details: [React.ReactNode, React.ReactNode][][] = [
  [
    ['תאריך', '21/01/2019'],
    ['שעת התחלה', <>05:30<Arrow />05:29:42 <Red>(0)</Red></>],
    ['שעת סיום', <>06:11<Arrow />06:08:51 <Red>(-3)</Red></>],
    ['מספר קו', <span dir="ltr">4-2-0</span>],
  ],
  [
    ['שם נהג', <><span className="text-[13.200px]">אברהם שיראל</span> (<bdi>053-7001950</bdi>)</>],
    ['מספר רכב', <span dir="ltr">76-083-34</span>],
    ['קוד סידור', '67'],
    ['תיאור', <><span dir="ltr">004-20</span><span className="text-[12.800px]"> : מסוף רמות - מסוף י"א</span></>],
  ],
  [
    ['אחוז ביצוע', <><bdi>52/53</bdi> (<bdi dir="ltr">98%</bdi>)</>],
    ['הזמנה / נסיעה', '35435550 / 5293136'],
    [<>ק"מ תכנון<Arrow className="ml-[5px] mr-[3px]" />ביצוע</>, <>21.5<Arrow className="ml-[5px] mr-[8px]" />21.1 <Red>(-0.33)</Red></>],
  ],
];

function Details() {
  return (
    <section className="relative flex h-[116px] rounded-[5px] border border-[#ccc] pr-[10px] pt-[8px] text-[14px] leading-[25px] text-[#333]">
      {details.map((col, i) => (
        <dl key={i} className="w-[494px] shrink-0 whitespace-nowrap last:w-[460px]">
          {col.map(([k, v], j) => (
            <div key={j} className="flex h-[25px]">
              <dt className="w-[165px] text-[13.300px] font-bold">{k}</dt>
              <dd>{v}</dd>
            </div>
          ))}
        </dl>
      ))}
      <button className="absolute bottom-[-11px] left-[736px] flex h-[12px] w-[31px] items-center justify-center rounded-b-[5px] bg-white shadow-[0_1px_3px_rgba(0,0,0,0.4)]">
        <svg viewBox="0 0 8 5" className="h-[5px] w-[8px]" fill="none" stroke="#555" strokeWidth="2">
          <path d="M1 4.200L4 1.300L7 4.200" />
        </svg>
      </button>
    </section>
  );
}

function Exceptions() {
  return (
    <section className="flex w-[559px] flex-col">
      <div className="flex h-[25px] pr-[10px] text-[13px] font-bold">
        <div className="relative z-10 flex h-[26px] w-[61px] items-center justify-center rounded-t border border-b-0 border-[#ddd] bg-white text-[#444]">חריגות</div>
        <div className="mr-[5px] flex w-[59px] items-center justify-center rounded-t border border-b-0 border-[#d5d5d5] bg-[#e6e6e6] text-[#3aa9d8]">תחנות</div>
      </div>
      <div className="flex flex-1 flex-col border border-[#ddd] px-[15px] pb-[21px] pt-[15px]">
        <table className="w-full border-collapse border border-[#ccc] text-[#333]">
          <thead>
            <tr className="h-[26px] border-b-2 border-[#ccc] bg-[#f0f0f0] text-[10.5px] text-[#3aa9d8]">
              <th className="w-[160px] border border-b-2 border-[#ccc] font-normal">סוג חריגה</th>
              <th className="border border-b-2 border-[#ccc] font-normal">הערות</th>
            </tr>
          </thead>
          <tbody>
            <tr className="h-[36px] bg-[#f9f9f9] text-[13.300px]">
              <td className="border border-[#ccc] pr-[5px]">ביצוע חלקי</td>
              <td className="border border-[#ccc] px-[5px]">
                <div className="h-[28px] rounded border border-[#ccc] bg-white shadow-[inset_0_1px_1px_rgba(0,0,0,0.075)]" />
              </td>
            </tr>
          </tbody>
        </table>
        <div className="mb-[10px] mt-auto flex h-[26px] items-start text-[13px] text-[#333]">
          <span className="w-[93px]">סטטוס בדיקה</span>
          <div className="flex h-[26px] w-[80px] rounded-[3px] border border-[#ccc] bg-linear-to-b from-white from-50% to-[#e0e0e0]">
            <div className="flex-1 border-l border-[#ccc]" />
            <div className="flex w-[29px] items-center justify-center">
              <svg viewBox="0 0 10 6" className="h-[6px] w-[10px]"><path d="M0 0H10L5 6Z" fill="#222" /></svg>
            </div>
          </div>
        </div>
        <div className="h-[68px] rounded border border-[#ccc] px-[12px] pt-[4px] text-[13px] text-[#777] shadow-[inset_0_1px_1px_rgba(0,0,0,0.075)]">הערות</div>
      </div>
    </section>
  );
}

export default function App() {
  return (
    <div dir="rtl" className="flex h-[925px] w-[1920px] flex-col overflow-hidden bg-[#ededed] font-['Liberation_Sans',Arial,sans-serif]">
      <Header />
      <div className="flex flex-1">
        <Sidebar />
        <div className="relative w-[320px] shrink-0 bg-[#4e5258] bg-[repeating-linear-gradient(45deg,rgba(0,0,0,0.07)_0_1px,transparent_1px_3px),repeating-linear-gradient(-45deg,rgba(255,255,255,0.03)_0_1px,transparent_1px_3px)] shadow-[inset_5px_0_8px_-2px_rgba(0,0,0,0.45)]">
          <button className="absolute left-[-9px] top-[426px] flex h-[36px] w-[11px] items-center justify-center rounded-[3px] bg-white shadow-[0_1px_2px_rgba(0,0,0,0.4)]">
            <svg viewBox="0 0 5 8" className="h-[8px] w-[5px]" fill="none" stroke="#333" strokeWidth="1.700">
              <path d="M1 1L4 4L1 7" />
            </svg>
          </button>
        </div>
        <main className="w-[1540px] shrink-0 pt-[10px]">
          <Tabs />
          <div className="mx-[15px] h-[842px] border-x-[3px] border-b-[3px] border-t border-[#ddd] bg-white px-[15px] pt-[14px]">
            <div className="flex h-[22px] items-start text-[12px] leading-[18px] text-[#666]">
              <div className="flex items-center gap-[3px] pr-[2px]">
                <FaShareAlt className="size-[12px] text-[#3aa9d8]" />
                <span>שיתוף</span>
              </div>
              <div className="mr-auto flex items-center">
                <FloppyIcon className="ml-[3px] size-[12px]" />
                <span className="ml-[11px] text-[11.500px]">שמור</span>
                <RefreshIcon className="ml-[3px] size-[12px] text-[#3aa9d8]" />
                <span className="ml-[10px] text-[11.500px]">רענן</span>
                <XIcon className="ml-[4px] size-[9px] text-[#3aa9d8]" />
                <span className="text-[11.500px]">סגור</span>
              </div>
            </div>
            <Details />
            <div className="mt-[20px] flex h-[650px] justify-between">
              <Exceptions />
              <MapPanel />
            </div>
          </div>
        </main>
      </div>
    </div>
  );
}
